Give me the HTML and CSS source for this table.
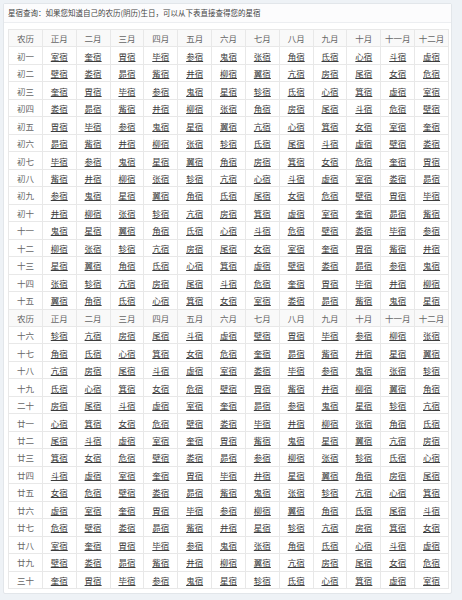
FILE: index.html
```html
<!DOCTYPE html>
<html lang="zh-CN">
<head>
<meta charset="utf-8">
<title>星宿查询</title>
<link rel="stylesheet" href="styles.css">
</head>
<body>
<div class="panel">
  <div class="panel-title">星宿查询：如果您知道自己的农历(阴历)生日，可以从下表直接查得您的星宿</div>
  <div class="panel-body">
    <table class="xiu">
      <tbody>
        <tr class="head"><td>农历</td><td>正月</td><td>二月</td><td>三月</td><td>四月</td><td>五月</td><td>六月</td><td>七月</td><td>八月</td><td>九月</td><td>十月</td><td>十一月</td><td>十二月</td></tr>
        <tr><td class="day">初一</td><td><a href="#">室宿</a></td><td><a href="#">奎宿</a></td><td><a href="#">胃宿</a></td><td><a href="#">毕宿</a></td><td><a href="#">参宿</a></td><td><a href="#">鬼宿</a></td><td><a href="#">张宿</a></td><td><a href="#">角宿</a></td><td><a href="#">氐宿</a></td><td><a href="#">心宿</a></td><td><a href="#">斗宿</a></td><td><a href="#">虚宿</a></td></tr>
        <tr><td class="day">初二</td><td><a href="#">壁宿</a></td><td><a href="#">娄宿</a></td><td><a href="#">昴宿</a></td><td><a href="#">觜宿</a></td><td><a href="#">井宿</a></td><td><a href="#">柳宿</a></td><td><a href="#">翼宿</a></td><td><a href="#">亢宿</a></td><td><a href="#">房宿</a></td><td><a href="#">尾宿</a></td><td><a href="#">女宿</a></td><td><a href="#">危宿</a></td></tr>
        <tr><td class="day">初三</td><td><a href="#">奎宿</a></td><td><a href="#">胃宿</a></td><td><a href="#">毕宿</a></td><td><a href="#">参宿</a></td><td><a href="#">鬼宿</a></td><td><a href="#">星宿</a></td><td><a href="#">轸宿</a></td><td><a href="#">氐宿</a></td><td><a href="#">心宿</a></td><td><a href="#">箕宿</a></td><td><a href="#">虚宿</a></td><td><a href="#">室宿</a></td></tr>
        <tr><td class="day">初四</td><td><a href="#">娄宿</a></td><td><a href="#">昴宿</a></td><td><a href="#">觜宿</a></td><td><a href="#">井宿</a></td><td><a href="#">柳宿</a></td><td><a href="#">张宿</a></td><td><a href="#">角宿</a></td><td><a href="#">房宿</a></td><td><a href="#">尾宿</a></td><td><a href="#">斗宿</a></td><td><a href="#">危宿</a></td><td><a href="#">壁宿</a></td></tr>
        <tr><td class="day">初五</td><td><a href="#">胃宿</a></td><td><a href="#">毕宿</a></td><td><a href="#">参宿</a></td><td><a href="#">鬼宿</a></td><td><a href="#">星宿</a></td><td><a href="#">翼宿</a></td><td><a href="#">亢宿</a></td><td><a href="#">心宿</a></td><td><a href="#">箕宿</a></td><td><a href="#">女宿</a></td><td><a href="#">室宿</a></td><td><a href="#">奎宿</a></td></tr>
        <tr><td class="day">初六</td><td><a href="#">昴宿</a></td><td><a href="#">觜宿</a></td><td><a href="#">井宿</a></td><td><a href="#">柳宿</a></td><td><a href="#">张宿</a></td><td><a href="#">轸宿</a></td><td><a href="#">氐宿</a></td><td><a href="#">尾宿</a></td><td><a href="#">斗宿</a></td><td><a href="#">虚宿</a></td><td><a href="#">壁宿</a></td><td><a href="#">娄宿</a></td></tr>
        <tr><td class="day">初七</td><td><a href="#">毕宿</a></td><td><a href="#">参宿</a></td><td><a href="#">鬼宿</a></td><td><a href="#">星宿</a></td><td><a href="#">翼宿</a></td><td><a href="#">角宿</a></td><td><a href="#">房宿</a></td><td><a href="#">箕宿</a></td><td><a href="#">女宿</a></td><td><a href="#">危宿</a></td><td><a href="#">奎宿</a></td><td><a href="#">胃宿</a></td></tr>
        <tr><td class="day">初八</td><td><a href="#">觜宿</a></td><td><a href="#">井宿</a></td><td><a href="#">柳宿</a></td><td><a href="#">张宿</a></td><td><a href="#">轸宿</a></td><td><a href="#">亢宿</a></td><td><a href="#">心宿</a></td><td><a href="#">斗宿</a></td><td><a href="#">虚宿</a></td><td><a href="#">室宿</a></td><td><a href="#">娄宿</a></td><td><a href="#">昴宿</a></td></tr>
        <tr><td class="day">初九</td><td><a href="#">参宿</a></td><td><a href="#">鬼宿</a></td><td><a href="#">星宿</a></td><td><a href="#">翼宿</a></td><td><a href="#">角宿</a></td><td><a href="#">氐宿</a></td><td><a href="#">尾宿</a></td><td><a href="#">女宿</a></td><td><a href="#">危宿</a></td><td><a href="#">壁宿</a></td><td><a href="#">胃宿</a></td><td><a href="#">毕宿</a></td></tr>
        <tr><td class="day">初十</td><td><a href="#">井宿</a></td><td><a href="#">柳宿</a></td><td><a href="#">张宿</a></td><td><a href="#">轸宿</a></td><td><a href="#">亢宿</a></td><td><a href="#">房宿</a></td><td><a href="#">箕宿</a></td><td><a href="#">虚宿</a></td><td><a href="#">室宿</a></td><td><a href="#">奎宿</a></td><td><a href="#">昴宿</a></td><td><a href="#">觜宿</a></td></tr>
        <tr><td class="day">十一</td><td><a href="#">鬼宿</a></td><td><a href="#">星宿</a></td><td><a href="#">翼宿</a></td><td><a href="#">角宿</a></td><td><a href="#">氐宿</a></td><td><a href="#">心宿</a></td><td><a href="#">斗宿</a></td><td><a href="#">危宿</a></td><td><a href="#">壁宿</a></td><td><a href="#">娄宿</a></td><td><a href="#">毕宿</a></td><td><a href="#">参宿</a></td></tr>
        <tr><td class="day">十二</td><td><a href="#">柳宿</a></td><td><a href="#">张宿</a></td><td><a href="#">轸宿</a></td><td><a href="#">亢宿</a></td><td><a href="#">房宿</a></td><td><a href="#">尾宿</a></td><td><a href="#">女宿</a></td><td><a href="#">室宿</a></td><td><a href="#">奎宿</a></td><td><a href="#">胃宿</a></td><td><a href="#">觜宿</a></td><td><a href="#">井宿</a></td></tr>
        <tr><td class="day">十三</td><td><a href="#">星宿</a></td><td><a href="#">翼宿</a></td><td><a href="#">角宿</a></td><td><a href="#">氐宿</a></td><td><a href="#">心宿</a></td><td><a href="#">箕宿</a></td><td><a href="#">虚宿</a></td><td><a href="#">壁宿</a></td><td><a href="#">娄宿</a></td><td><a href="#">昴宿</a></td><td><a href="#">参宿</a></td><td><a href="#">鬼宿</a></td></tr>
        <tr><td class="day">十四</td><td><a href="#">张宿</a></td><td><a href="#">轸宿</a></td><td><a href="#">亢宿</a></td><td><a href="#">房宿</a></td><td><a href="#">尾宿</a></td><td><a href="#">斗宿</a></td><td><a href="#">危宿</a></td><td><a href="#">奎宿</a></td><td><a href="#">胃宿</a></td><td><a href="#">毕宿</a></td><td><a href="#">井宿</a></td><td><a href="#">柳宿</a></td></tr>
        <tr><td class="day">十五</td><td><a href="#">翼宿</a></td><td><a href="#">角宿</a></td><td><a href="#">氐宿</a></td><td><a href="#">心宿</a></td><td><a href="#">箕宿</a></td><td><a href="#">女宿</a></td><td><a href="#">室宿</a></td><td><a href="#">娄宿</a></td><td><a href="#">昴宿</a></td><td><a href="#">觜宿</a></td><td><a href="#">鬼宿</a></td><td><a href="#">星宿</a></td></tr>
        <tr class="head"><td>农历</td><td>正月</td><td>二月</td><td>三月</td><td>四月</td><td>五月</td><td>六月</td><td>七月</td><td>八月</td><td>九月</td><td>十月</td><td>十一月</td><td>十二月</td></tr>
        <tr><td class="day">十六</td><td><a href="#">轸宿</a></td><td><a href="#">亢宿</a></td><td><a href="#">房宿</a></td><td><a href="#">尾宿</a></td><td><a href="#">斗宿</a></td><td><a href="#">虚宿</a></td><td><a href="#">壁宿</a></td><td><a href="#">胃宿</a></td><td><a href="#">毕宿</a></td><td><a href="#">参宿</a></td><td><a href="#">柳宿</a></td><td><a href="#">张宿</a></td></tr>
        <tr><td class="day">十七</td><td><a href="#">角宿</a></td><td><a href="#">氐宿</a></td><td><a href="#">心宿</a></td><td><a href="#">箕宿</a></td><td><a href="#">女宿</a></td><td><a href="#">危宿</a></td><td><a href="#">奎宿</a></td><td><a href="#">昴宿</a></td><td><a href="#">觜宿</a></td><td><a href="#">井宿</a></td><td><a href="#">星宿</a></td><td><a href="#">翼宿</a></td></tr>
        <tr><td class="day">十八</td><td><a href="#">亢宿</a></td><td><a href="#">房宿</a></td><td><a href="#">尾宿</a></td><td><a href="#">斗宿</a></td><td><a href="#">虚宿</a></td><td><a href="#">室宿</a></td><td><a href="#">娄宿</a></td><td><a href="#">毕宿</a></td><td><a href="#">参宿</a></td><td><a href="#">鬼宿</a></td><td><a href="#">张宿</a></td><td><a href="#">轸宿</a></td></tr>
        <tr><td class="day">十九</td><td><a href="#">氐宿</a></td><td><a href="#">心宿</a></td><td><a href="#">箕宿</a></td><td><a href="#">女宿</a></td><td><a href="#">危宿</a></td><td><a href="#">壁宿</a></td><td><a href="#">胃宿</a></td><td><a href="#">觜宿</a></td><td><a href="#">井宿</a></td><td><a href="#">柳宿</a></td><td><a href="#">翼宿</a></td><td><a href="#">角宿</a></td></tr>
        <tr><td class="day">二十</td><td><a href="#">房宿</a></td><td><a href="#">尾宿</a></td><td><a href="#">斗宿</a></td><td><a href="#">虚宿</a></td><td><a href="#">室宿</a></td><td><a href="#">奎宿</a></td><td><a href="#">昴宿</a></td><td><a href="#">参宿</a></td><td><a href="#">鬼宿</a></td><td><a href="#">星宿</a></td><td><a href="#">轸宿</a></td><td><a href="#">亢宿</a></td></tr>
        <tr><td class="day">廿一</td><td><a href="#">心宿</a></td><td><a href="#">箕宿</a></td><td><a href="#">女宿</a></td><td><a href="#">危宿</a></td><td><a href="#">壁宿</a></td><td><a href="#">娄宿</a></td><td><a href="#">毕宿</a></td><td><a href="#">井宿</a></td><td><a href="#">柳宿</a></td><td><a href="#">张宿</a></td><td><a href="#">角宿</a></td><td><a href="#">氐宿</a></td></tr>
        <tr><td class="day">廿二</td><td><a href="#">尾宿</a></td><td><a href="#">斗宿</a></td><td><a href="#">虚宿</a></td><td><a href="#">室宿</a></td><td><a href="#">奎宿</a></td><td><a href="#">胃宿</a></td><td><a href="#">觜宿</a></td><td><a href="#">鬼宿</a></td><td><a href="#">星宿</a></td><td><a href="#">翼宿</a></td><td><a href="#">亢宿</a></td><td><a href="#">房宿</a></td></tr>
        <tr><td class="day">廿三</td><td><a href="#">箕宿</a></td><td><a href="#">女宿</a></td><td><a href="#">危宿</a></td><td><a href="#">壁宿</a></td><td><a href="#">娄宿</a></td><td><a href="#">昴宿</a></td><td><a href="#">参宿</a></td><td><a href="#">柳宿</a></td><td><a href="#">张宿</a></td><td><a href="#">轸宿</a></td><td><a href="#">氐宿</a></td><td><a href="#">心宿</a></td></tr>
        <tr><td class="day">廿四</td><td><a href="#">斗宿</a></td><td><a href="#">虚宿</a></td><td><a href="#">室宿</a></td><td><a href="#">奎宿</a></td><td><a href="#">胃宿</a></td><td><a href="#">毕宿</a></td><td><a href="#">井宿</a></td><td><a href="#">星宿</a></td><td><a href="#">翼宿</a></td><td><a href="#">角宿</a></td><td><a href="#">房宿</a></td><td><a href="#">尾宿</a></td></tr>
        <tr><td class="day">廿五</td><td><a href="#">女宿</a></td><td><a href="#">危宿</a></td><td><a href="#">壁宿</a></td><td><a href="#">娄宿</a></td><td><a href="#">昴宿</a></td><td><a href="#">觜宿</a></td><td><a href="#">鬼宿</a></td><td><a href="#">张宿</a></td><td><a href="#">轸宿</a></td><td><a href="#">亢宿</a></td><td><a href="#">心宿</a></td><td><a href="#">箕宿</a></td></tr>
        <tr><td class="day">廿六</td><td><a href="#">虚宿</a></td><td><a href="#">室宿</a></td><td><a href="#">奎宿</a></td><td><a href="#">胃宿</a></td><td><a href="#">毕宿</a></td><td><a href="#">参宿</a></td><td><a href="#">柳宿</a></td><td><a href="#">翼宿</a></td><td><a href="#">角宿</a></td><td><a href="#">氐宿</a></td><td><a href="#">尾宿</a></td><td><a href="#">斗宿</a></td></tr>
        <tr><td class="day">廿七</td><td><a href="#">危宿</a></td><td><a href="#">壁宿</a></td><td><a href="#">娄宿</a></td><td><a href="#">昴宿</a></td><td><a href="#">觜宿</a></td><td><a href="#">井宿</a></td><td><a href="#">星宿</a></td><td><a href="#">轸宿</a></td><td><a href="#">亢宿</a></td><td><a href="#">房宿</a></td><td><a href="#">箕宿</a></td><td><a href="#">女宿</a></td></tr>
        <tr><td class="day">廿八</td><td><a href="#">室宿</a></td><td><a href="#">奎宿</a></td><td><a href="#">胃宿</a></td><td><a href="#">毕宿</a></td><td><a href="#">参宿</a></td><td><a href="#">鬼宿</a></td><td><a href="#">张宿</a></td><td><a href="#">角宿</a></td><td><a href="#">氐宿</a></td><td><a href="#">心宿</a></td><td><a href="#">斗宿</a></td><td><a href="#">虚宿</a></td></tr>
        <tr><td class="day">廿九</td><td><a href="#">壁宿</a></td><td><a href="#">娄宿</a></td><td><a href="#">昴宿</a></td><td><a href="#">觜宿</a></td><td><a href="#">井宿</a></td><td><a href="#">柳宿</a></td><td><a href="#">翼宿</a></td><td><a href="#">亢宿</a></td><td><a href="#">房宿</a></td><td><a href="#">尾宿</a></td><td><a href="#">女宿</a></td><td><a href="#">危宿</a></td></tr>
        <tr><td class="day">三十</td><td><a href="#">奎宿</a></td><td><a href="#">胃宿</a></td><td><a href="#">毕宿</a></td><td><a href="#">参宿</a></td><td><a href="#">鬼宿</a></td><td><a href="#">星宿</a></td><td><a href="#">轸宿</a></td><td><a href="#">氐宿</a></td><td><a href="#">心宿</a></td><td><a href="#">箕宿</a></td><td><a href="#">虚宿</a></td><td><a href="#">室宿</a></td></tr>
      </tbody>
    </table>
  </div>
</div>
</body>
</html>
```

FILE: styles.css
```css
html, body {
  margin: 0;
  padding: 0;
}
body {
  background: #eef2f6;
  font-family: "Noto Sans CJK SC", "Noto Sans", sans-serif;
  padding: 3px 10px 5px 3px;
}
.panel {
  background: #ffffff;
  border: 1px solid #e2e6ea;
  border-radius: 2px;
}
.panel-title {
  height: 18px;
  line-height: 18px;
  padding-left: 4px;
  font-size: 7.5px;
  color: #444;
  border-bottom: 1px solid #eceef1;
  background: #fcfcfd;
}
.panel-body {
  padding: 6px 3px 4px 4px;
}
.xiu {
  width: 441px;
  table-layout: fixed;
  border-collapse: collapse;
}
.xiu td {
  border: 1px solid #e8e8e8;
  height: 16.47px;
  padding: 0;
  text-align: center;
  font-size: 8.5px;
  line-height: 12px;
  color: #666;
  white-space: nowrap;
}
.xiu .head td {
  background: #f9f9f9;
}
.xiu a {
  color: #3c3c3c;
  text-decoration: underline;
}
```
